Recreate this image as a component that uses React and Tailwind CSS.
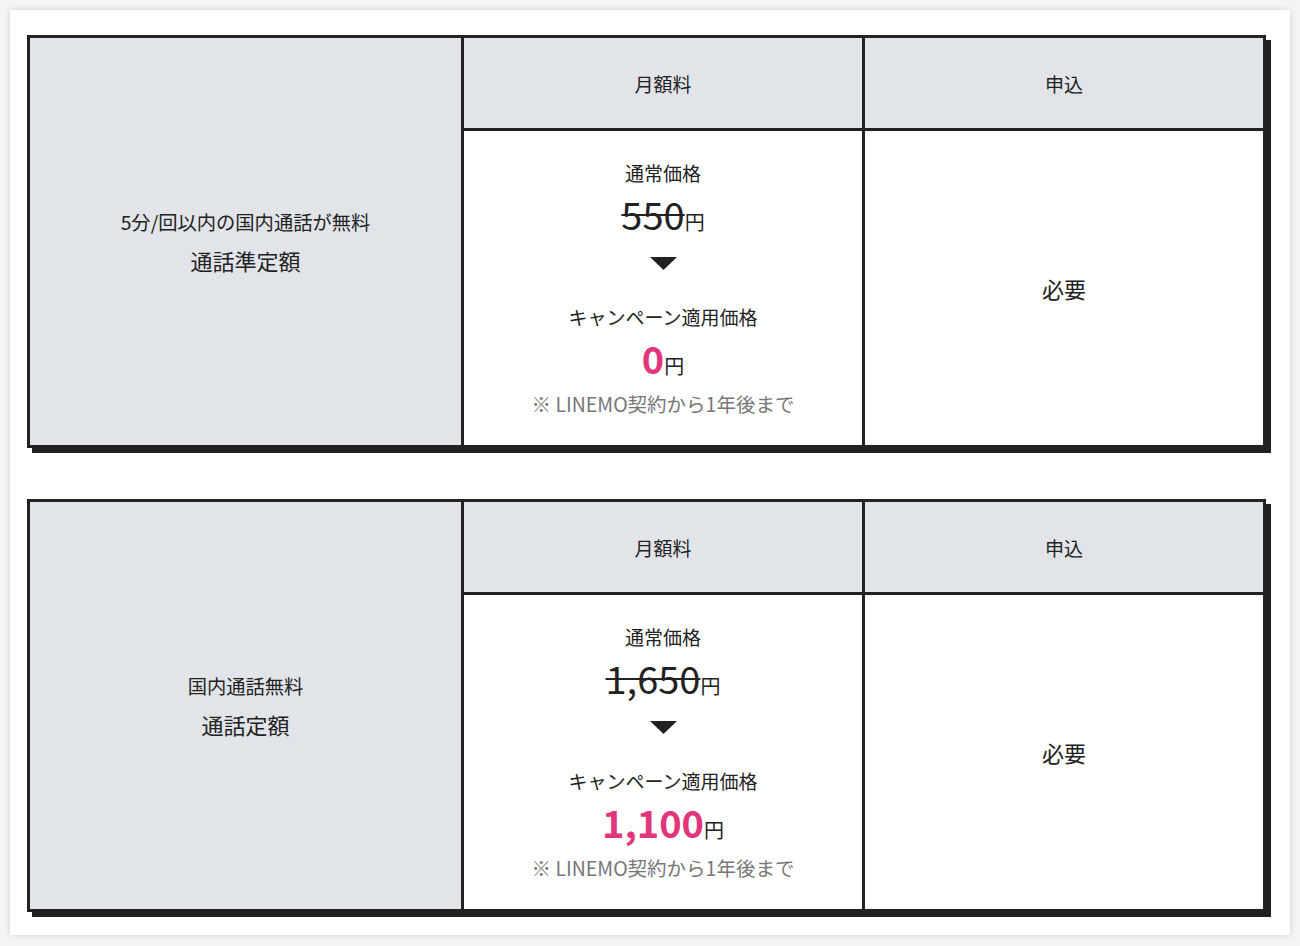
const plans = [
  {
    sub: "5分/回以内の国内通話が無料",
    name: "通話準定額",
    regular: "550",
    campaign: "0",
  },
  {
    sub: "国内通話無料",
    name: "通話定額",
    regular: "1,650",
    campaign: "1,100",
  },
];

function PlanTable({ plan }) {
  return (
    <div className="w-[1239px] border-[3px] border-[#222] shadow-[5px_5px_0_#222]">
      <div className="grid grid-cols-[431px_398px_398px] grid-rows-[90px_314px] gap-[3px] bg-[#222] text-[#222]">
        <div className="row-span-2 bg-[#e1e4e9] flex flex-col items-center justify-center">
          <p className="text-[19.3px] leading-[28px]">{plan.sub}</p>
          <p className="text-[22px] leading-[32px] mt-[8px]">{plan.name}</p>
        </div>
        <div className="bg-[#e1e4e9] flex items-center justify-center text-[19px] pt-[2px]">
          月額料
        </div>
        <div className="bg-[#e1e4e9] flex items-center justify-center text-[19px] pt-[2px]">
          申込
        </div>
        <div className="bg-white flex flex-col items-center pt-[28px]">
          <p className="h-[28px] text-[19px] leading-[28px]">通常価格</p>
          <div className="h-[44px] mt-[5px] flex items-baseline justify-center">
            <span className="text-[38px] leading-[44px] line-through decoration-[2px]">
              {plan.regular}
            </span>
            <span className="text-[20px] leading-[44px]">円</span>
          </div>
          <svg width="27" height="13" viewBox="0 0 27 13" className="mt-[21px]">
            <polygon points="0,0 27,0 13.5,13" fill="#222" />
          </svg>
          <p className="h-[28px] text-[19px] leading-[28px] mt-[33px]">
            キャンペーン適用価格
          </p>
          <div className="h-[44px] mt-[5px] flex items-baseline justify-center">
            <span className="text-[38px] leading-[44px] font-bold text-[#e2367c]">
              {plan.campaign}
            </span>
            <span className="text-[20px] leading-[44px]">円</span>
          </div>
          <p className="h-[28px] text-[19.5px] leading-[28px] mt-[10px] text-[#777]">
            ※ LINEMO契約から1年後まで
          </p>
        </div>
        <div className="bg-white flex items-center justify-center text-[22px]">
          必要
        </div>
      </div>
    </div>
  );
}

export default function App() {
  return (
    <div
      className="min-h-[946px] bg-[#f4f4f4] pt-[10px] pb-[11px] px-[10px]"
      style={{ fontFamily: '"Noto Sans CJK JP", "Noto Sans", sans-serif' }}
    >
      <div className="bg-white shadow-[0_0_6px_rgba(0,0,0,0.15)] pl-[17px] pr-[24px] pt-[25px] pb-[23px] flex flex-col gap-[51px]">
        {plans.map((plan) => (
          <PlanTable key={plan.name} plan={plan} />
        ))}
      </div>
    </div>
  );
}
